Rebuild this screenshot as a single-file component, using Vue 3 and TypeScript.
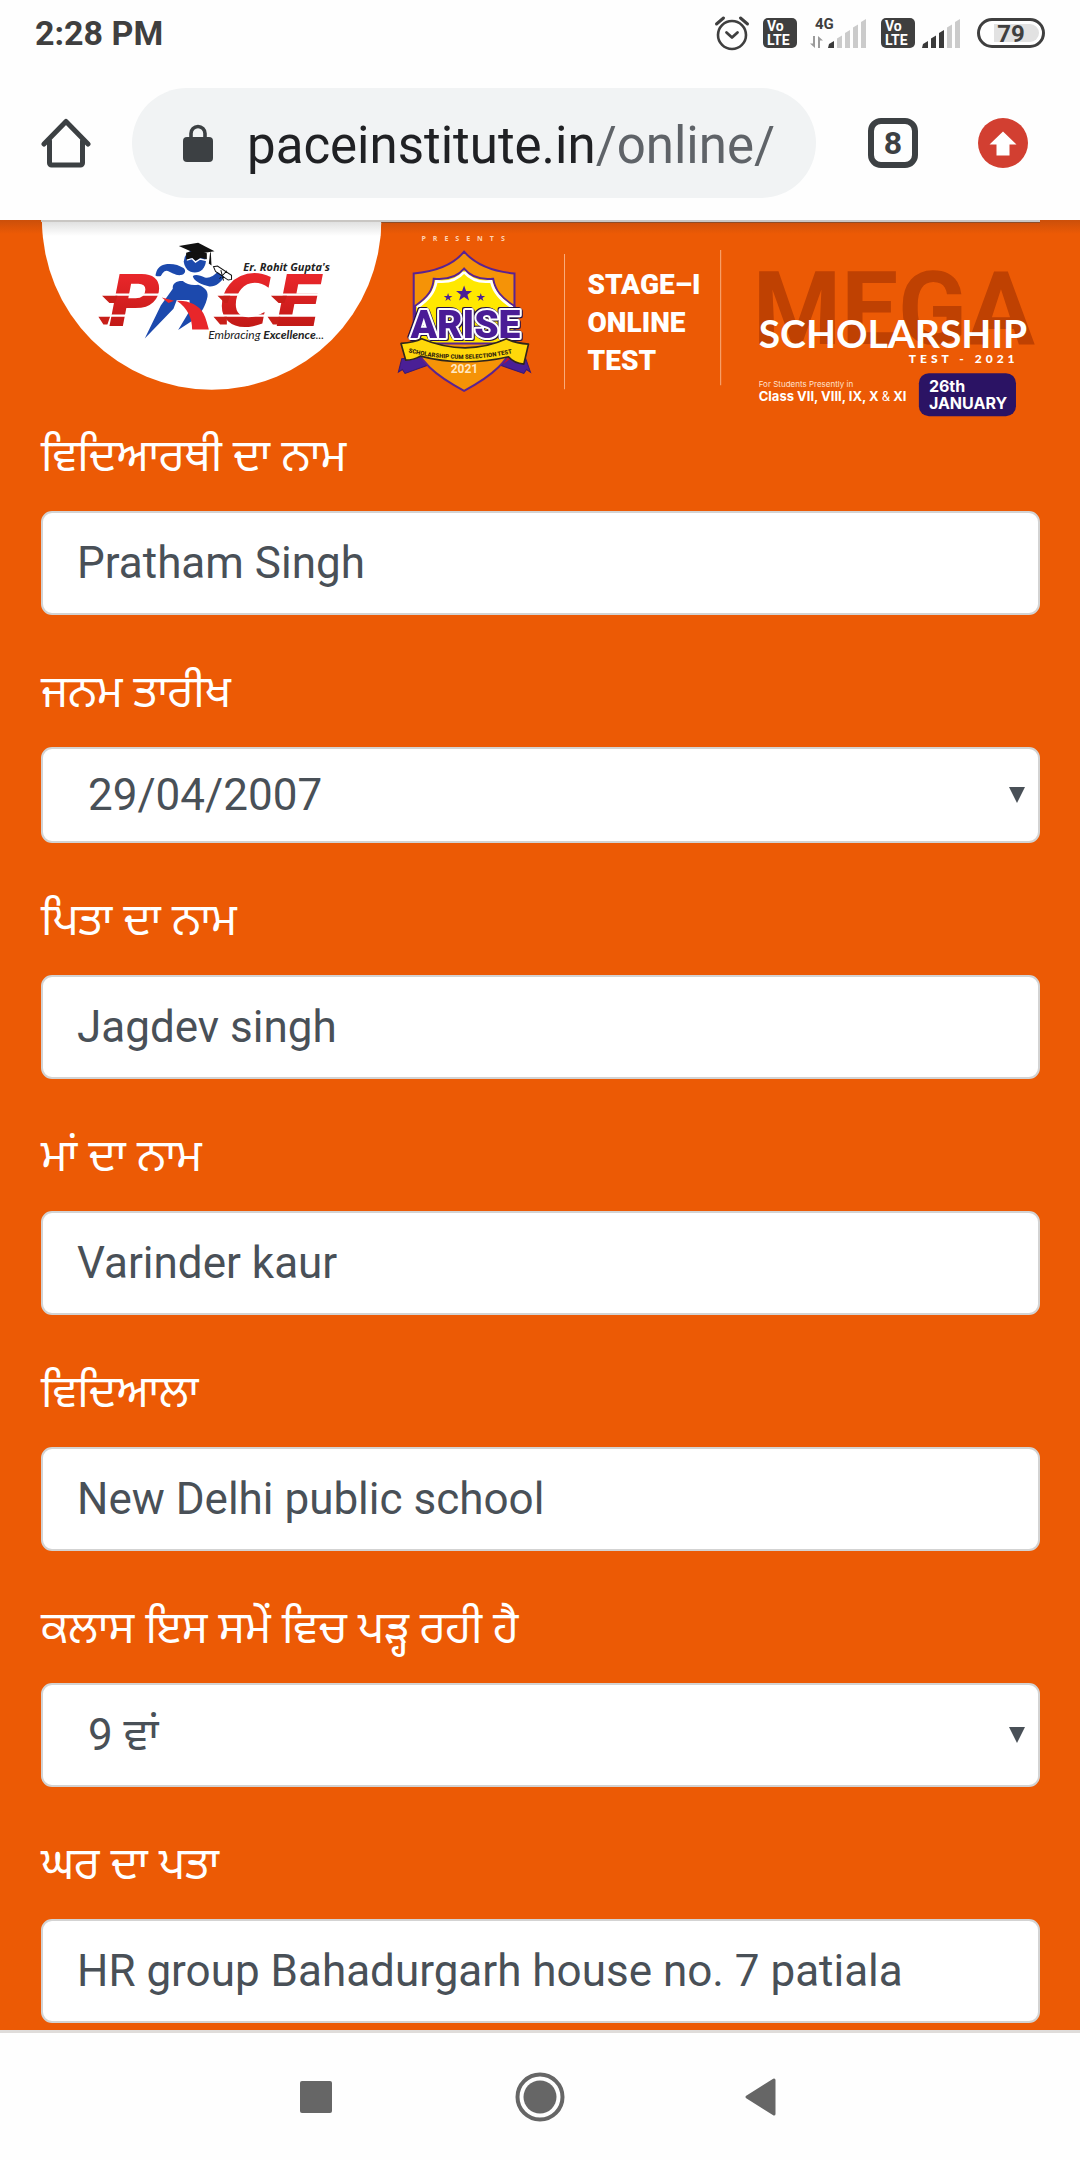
<script setup lang="ts">
import { reactive } from 'vue'

interface Field {
  id: string
  label: string
  kind: 'text' | 'date' | 'select'
}

const fields: Field[] = [
  { id: 'student', label: 'ਵਿਦਿਆਰਥੀ ਦਾ ਨਾਮ', kind: 'text' },
  { id: 'birth', label: 'ਜਨਮ ਤਾਰੀਖ', kind: 'date' },
  { id: 'father', label: 'ਪਿਤਾ ਦਾ ਨਾਮ', kind: 'text' },
  { id: 'mother', label: 'ਮਾਂ ਦਾ ਨਾਮ', kind: 'text' },
  { id: 'school', label: 'ਵਿਦਿਆਲਾ', kind: 'text' },
  { id: 'grade', label: 'ਕਲਾਸ ਇਸ ਸਮੇਂ ਵਿਚ ਪੜ੍ਹ ਰਹੀ ਹੈ', kind: 'select' },
  { id: 'address', label: 'ਘਰ ਦਾ ਪਤਾ', kind: 'text' },
]

const values = reactive<Record<string, string>>({
  student: 'Pratham Singh',
  birth: '29/04/2007',
  father: 'Jagdev singh',
  mother: 'Varinder kaur',
  school: 'New Delhi public school',
  grade: '9 ਵਾਂ',
  address: 'HR group Bahadurgarh house no. 7 patiala',
})

const signals = [
  { id: 'sim1', active: 1, data: true },
  { id: 'sim2', active: 3, data: false },
]
const bars = [0, 1, 2, 3, 4]
</script>

<template>
  <div class="screen">
    <header class="status">
      <span class="clock">2:28 PM</span>
      <div class="indicators">
        <svg class="alarm" viewBox="0 0 36 36" width="36" height="36" fill="none" stroke="#3f3f3f" stroke-linecap="round">
          <circle cx="18" cy="20" r="14" stroke-width="2.6" />
          <path d="M12.5 17.5 18 22.5 23.500 17.500" stroke-width="2.800" stroke-linejoin="round" />
          <path d="M2.500 9 9.500 3M33.500 9 26.500 3" stroke-width="3" />
        </svg>
        <template v-for="s in signals" :key="s.id">
          <svg class="volte" viewBox="0 0 34 30" width="34" height="30">
            <rect width="34" height="30" rx="5" fill="#3f3f3f" />
            <text x="4" y="13" font-size="14" fill="#fff">Vo</text>
            <text x="4" y="27" font-size="14" fill="#fff">LTE</text>
          </svg>
          <svg :class="{ plain: !s.data }" :viewBox="s.data ? '0 0 58 34' : '0 0 42 34'" :width="s.data ? 58 : 42" height="34">
            <g v-if="s.data">
              <text x="5" y="13" font-size="15" fill="#3f3f3f">4G</text>
              <path d="M5 20V32L0 27.500H3V20ZM8 32V20L13 24.500H10V32Z" fill="#9b9b9b" />
            </g>
            <g :transform="s.data ? 'translate(18 0)' : ''">
              <path
                v-for="b in bars"
                :key="b"
                :d="`M${b * 8 + 1} ${28 - b * 5.5}L${b * 8 + 6} ${25 - b * 5.5}V32H${b * 8 + (b ? 1 : 0)}Z`"
                :fill="b < s.active ? '#3a3a3a' : '#cbcbcb'"
              />
            </g>
          </svg>
        </template>
        <svg class="battery" viewBox="0 0 68 30" width="68" height="30">
          <rect x="1.500" y="1.500" width="65" height="27" rx="13.500" fill="#fff" stroke="#3f3f3f" stroke-width="3" />
          <path d="M17 6H53A9 9 0 0 1 53 24H17Z" fill="#e2e2e2" />
          <text x="34" y="24" font-size="24" text-anchor="middle" fill="#3f3f3f">79</text>
        </svg>
      </div>
    </header>

    <div class="toolbar">
      <button class="tool" type="button" aria-label="Home">
        <svg viewBox="0 0 50 50" width="50" height="50" fill="none" stroke="#3c4043" stroke-width="5" stroke-linejoin="round" stroke-linecap="round">
          <path d="M8.500 23V45a2 2 0 0 0 2 2H39.500a2 2 0 0 0 2-2V23" />
          <path d="M3 26 25 3.500 47 26" />
        </svg>
      </button>
      <button class="omnibox" type="button">
        <svg viewBox="0 0 30 38" width="30" height="38">
          <rect y="13" width="30" height="25" rx="4" fill="#3c4043" />
          <path d="M8 15V9.500a7 7 0 0 1 14 0V15" fill="none" stroke="#3c4043" stroke-width="3.600" />
        </svg>
        <span class="url"><span class="host">paceinstitute.in</span>/online/</span>
      </button>
      <button class="tool tabs" type="button" aria-label="Open tabs">8</button>
      <button class="tool" type="button" aria-label="Update available">
        <svg viewBox="0 0 50 50" width="50" height="50">
          <circle cx="25" cy="25" r="25" fill="#d23f31" />
          <path d="M25 13.500 38.500 26.500H31.500V37.500H18.500V26.500H11.500Z" fill="#fff" />
        </svg>
      </button>
    </div>

    <main class="page">
      <svg class="banner" viewBox="0 0 998 203">
        <defs>
          <linearGradient id="shade" x1="0" y1="0" x2="0" y2="1">
            <stop offset="0" stop-color="#dcdcdc" />
            <stop offset="1" stop-color="#fff" />
          </linearGradient>
          <linearGradient id="red" x1="0" y1="0" x2="0" y2="1">
            <stop offset="0.200" stop-color="#e8262a" />
            <stop offset="1" stop-color="#b5150f" />
          </linearGradient>
          <path id="ribbonLine" d="M367 132Q420 146 480 131" />
        </defs>

        <path d="M1 0H340A169.500 169.500 0 0 1 1 0Z" fill="#fff" />
        <path d="M1 0H340L339 16H2Z" fill="url(#shade)" />
        <rect x="340" y="2" width="658" height="1" fill="#8c4d28" />
        <rect width="998" height="2" fill="#c9c6c3" />

        <!-- PACE wordmark -->
        <g class="pace" fill="url(#red)">
          <text x="67" y="106">P</text>
          <text x="178" y="106">C</text>
          <text x="234" y="106">E</text>
        </g>
        <g transform="translate(-11 -10) scale(0.333333)">
          <g fill="#fff">
            <path d="M225 250H400V257H225ZM560 250H720V257H560ZM720 250H890V257H720Z" />
            <path d="M210 313H345V320H210ZM550 313H720V320H550ZM712 313H880V320H712Z" />
          </g>
          <g fill="#c81f19">
            <path d="M216 257H262L255 279H238ZM205 320H240L232 343H220ZM562 257H600L592 279H584ZM550 320H590L590 343H570ZM722 257H770L762 279H745ZM712 320H750L742 343H728Z" />
          </g>
          <!-- runner -->
          <g fill="#1c49ad">
            <path d="M376 196C380 176 388 166 404 163C424 159 446 164 460 174C470 182 464 194 452 195C436 197 424 186 410 182C400 182 396 192 392 198C386 199 380 199 376 196Z" />
            <path d="M488 198C496 192 510 196 524 202C538 206 552 196 562 186L582 200C572 218 556 230 538 229C518 226 490 214 488 198Z" />
            <path d="M428 236C426 220 440 212 458 213C470 224 486 226 504 224C526 232 538 246 530 268C522 296 508 316 490 330L444 360L480 300L478 270L440 270L430 296L344 385L392 286Z" />
            <circle cx="494" cy="154" r="33" />
          </g>
          <path d="M440 272C474 270 506 284 520 310C528 326 532 344 536 358H486C486 326 474 296 440 272Z" fill="#e8262a" />
          <path d="M395 262 432 272 415 279Z" fill="#e8262a" />
          <path d="M468 150V128L498 120 530 130V148L512 144 496 152 484 144Z" fill="#111" />
          <path d="M446 108 504 98 553 124 500 132Z" fill="#111" />
          <path d="M470 150 486 146 496 156 510 147 530 152" fill="none" stroke="#fff" stroke-width="4" />
          <path d="M540 126 536 160 544 166 542 128Z" fill="#111" />
          <path d="M556 184 550 170 562 168 604 196 604 208 594 210ZM572 180 580 212M590 182 568 206" fill="none" stroke="#111" stroke-width="3" />
        </g>
        <text x="202" y="51" class="author">Er. Rohit Gupta's</text>
        <text x="167" y="119" class="tagline">Embracing <tspan class="strong">Excellence</tspan>...</text>

        <!-- ARISE shield -->
        <text x="380" y="21" class="presents">PRESENTS</text>
        <g transform="translate(339 -10) scale(0.333333)">
          <path d="M64 446 54 486 66 478 74 490 140 466 120 440ZM436 446 450 486 438 478 430 490 362 466 382 440Z" fill="#4a1f96" stroke="#3a1870" stroke-width="3" />
          <path d="M118 440 140 466 130 446ZM382 440 368 462 392 444Z" fill="#c3122f" />
          <path d="M251 125C282 160 330 184 402 190V380C396 450 330 500 251 542C172 500 104 450 100 380V190C172 184 222 160 251 125Z" fill="#f59307" stroke="#5a2391" stroke-width="6" />
          <path d="M251 176C272 202 302 210 338 206C344 240 360 262 402 288V400H104V288C142 262 158 240 160 206C200 210 230 202 251 176Z" fill="#ffe800" stroke="#5a2391" stroke-width="6" />
          <path d="M251 186C272 210 302 218 332 214C340 246 358 268 396 292M110 292C146 268 162 246 168 214C200 218 230 210 251 186" fill="none" stroke="#fff" stroke-width="8" />
          <path d="M251 226 257 243 275 243 261 254 266 271 251 261 236 271 241 254 227 243 245 243ZM203 249 206 258 216 258 208 264 211 273 203 267 195 273 198 264 190 258 200 258ZM301 249 304 258 314 258 306 264 309 273 301 267 293 273 296 264 288 258 298 258Z" fill="#4a1f96" />
        </g>
        <text x="424" y="118" text-anchor="middle" class="arise">ARISE</text>
        <g transform="translate(339 -10) scale(0.333333)">
          <path d="M62 400C88 398 108 394 124 386C210 422 300 422 378 386C394 394 416 400 444 402L430 462C412 460 396 454 384 440C300 460 204 460 120 438C106 446 90 450 76 450Z" fill="#ffd80a" stroke="#30261c" stroke-width="5" stroke-linejoin="round" />
        </g>
        <text class="ribbon"><textPath href="#ribbonLine">SCHOLARSHIP CUM SELECTION TEST</textPath></text>
        <text x="423" y="153" text-anchor="middle" class="year">2021</text>

        <!-- stage title -->
        <path d="M523 34V169M679 30V165" stroke="#f9ad7d" stroke-width="1" />
        <g class="stage">
          <text x="546" y="74">STAGE–I</text>
          <text x="546" y="112">ONLINE</text>
          <text x="546" y="150">TEST</text>
        </g>

        <!-- scholarship title -->
        <text x="852" y="124" text-anchor="middle" class="mega">MEGA</text>
        <text x="717" y="128" class="scholar">SCHOLARSHIP</text>
        <text x="867" y="143" class="test">TEST - 2021</text>
        <text x="717" y="167" class="for">For Students Presently in</text>
        <text x="717" y="181" class="class">Class VII, VIII, IX, X <tspan class="amp">&amp;</tspan> XI</text>
        <rect x="877" y="153" width="97" height="43" rx="10" fill="#2b1364" />
        <text x="887" y="172" class="date">26th</text>
        <text x="887" y="189" class="date">JANUARY</text>
      </svg>

      <form class="form" @submit.prevent>
        <div v-for="f in fields" :key="f.id" class="group">
          <label :for="f.id">{{ f.label }}</label>
          <input v-if="f.kind === 'text'" :id="f.id" v-model="values[f.id]" class="control" type="text" />
          <div v-else class="picker">
            <select :id="f.id" v-model="values[f.id]" class="control" :class="{ short: f.kind === 'date' }">
              <option>{{ values[f.id] }}</option>
            </select>
            <svg class="caret" viewBox="0 0 16 16" width="16" height="16"><path d="M0 0H16L8 16Z" fill="#495057" /></svg>
          </div>
        </div>
      </form>
    </main>

    <nav class="keys">
      <button type="button" aria-label="Recent apps">
        <svg viewBox="0 0 50 50" width="50" height="50"><rect x="9" y="9" width="32" height="32" rx="2" fill="#666" /></svg>
      </button>
      <button type="button" aria-label="Home screen">
        <svg viewBox="0 0 50 50" width="50" height="50">
          <circle cx="25" cy="25" r="22.500" fill="none" stroke="#666" stroke-width="4" />
          <circle cx="25" cy="25" r="16.500" fill="#666" />
        </svg>
      </button>
      <button type="button" aria-label="Back">
        <svg viewBox="0 0 50 50" width="50" height="50">
          <path d="M8 25 35 8V42Z" fill="#666" stroke="#666" stroke-width="3" stroke-linejoin="round" />
        </svg>
      </button>
    </nav>
  </div>
</template>

<style>
body {
  margin: 0;
  background: #fff;
}
</style>

<style scoped>
.screen {
  display: flex;
  flex-direction: column;
  min-height: 100vh;
  font-family: Roboto, "Noto Sans", "Noto Sans Gurmukhi", sans-serif;
  background: #fefefe;
}
button {
  padding: 0;
  border: 0;
  background: none;
  font-family: inherit;
}
svg {
  display: block;
  flex: none;
}
.status {
  display: flex;
  align-items: center;
  justify-content: space-between;
  height: 66px;
  padding: 0 35px;
  color: #3f3f3f;
}
.clock {
  font-size: 34px;
  font-weight: 700;
}
.indicators {
  display: flex;
  align-items: center;
  gap: 13px;
  font-weight: 700;
}
.plain {
  margin-left: -6px;
}
.toolbar {
  display: flex;
  align-items: center;
  height: 154px;
  padding: 0 52px 0 41px;
}
.tool {
  width: 50px;
  height: 50px;
  flex: none;
}
.omnibox {
  display: flex;
  align-items: center;
  flex: 1;
  min-width: 0;
  height: 110px;
  margin: 0 52px 0 41px;
  padding: 0 42px 0 51px;
  gap: 34px;
  border-radius: 55px;
  background: #f1f3f4;
}
.url {
  padding-top: 6px;
  font-size: 51px;
  line-height: 60px;
  color: #5f6368;
  white-space: nowrap;
}
.host {
  color: #202124;
}
.tabs {
  box-sizing: border-box;
  margin-right: 60px;
  border: 6px solid #3c4043;
  border-radius: 13px;
  color: #3c4043;
  font-size: 32px;
  line-height: 38px;
  font-weight: 700;
}
.page {
  flex: 1;
  padding: 0 40px 0 41px;
  background: linear-gradient(#cb4f0a, #ec5a05 14px);
}
.banner {
  width: 100%;
  height: auto;
}
.pace {
  font: italic 700 71px "DejaVu Sans", sans-serif;
}
.author {
  font: italic 700 11px "Open Sans", sans-serif;
  fill: #222;
}
.tagline {
  font: italic 400 12px Lato, sans-serif;
  fill: #222;
}
.strong {
  font-weight: 700;
}
.presents {
  font: 700 7px "Open Sans", sans-serif;
  letter-spacing: 7px;
  fill: #ffd2b3;
}
.arise {
  font: 900 39px Roboto, sans-serif;
  fill: #4a1c96;
  stroke: #fff;
  stroke-width: 4px;
  stroke-linejoin: round;
  paint-order: stroke;
  filter: drop-shadow(1px 1px 0 #241044) drop-shadow(-1px -1px 0 #241044);
}
.ribbon {
  font: 900 6px Roboto, sans-serif;
  fill: #33240c;
}
.year {
  font: 700 12px Roboto, sans-serif;
  fill: #ffe9c4;
}
.stage {
  font: 900 28px Roboto, sans-serif;
  fill: #fff;
}
.mega {
  font: 700 101px Roboto, sans-serif;
  fill: #bf4102;
}
.scholar {
  font: 700 39px Lato, sans-serif;
  fill: #fff;
}
.test {
  font: 900 12px Lato, sans-serif;
  letter-spacing: 4px;
  fill: #fff;
}
.for {
  font: 400 8px Inter, sans-serif;
  fill: #ffe0cc;
}
.class {
  font: 700 13px Inter, sans-serif;
  fill: #fff;
}
.amp {
  font-weight: 400;
}
.date {
  font: 700 16px Inter, sans-serif;
  fill: #fff;
}
.form {
  color: #fff;
}
.group {
  display: flex;
  flex-direction: column;
  margin-bottom: 44px;
}
.group:last-child {
  margin-bottom: 6px;
}
label {
  height: 66px;
  margin-bottom: 22px;
  font-size: 44px;
  line-height: 66px;
}
.control {
  box-sizing: border-box;
  display: block;
  width: 100%;
  height: 104px;
  padding: 0 34px;
  border: 2px solid #d3d3d3;
  border-radius: 11px;
  background: #fff;
  color: #495057;
  font-family: inherit;
  font-size: 44px;
  appearance: none;
}
select.control {
  padding-left: 45px;
}
.control.short {
  height: 96px;
}
.picker {
  position: relative;
}
.caret {
  position: absolute;
  top: 50%;
  right: 15px;
  margin-top: -8px;
  pointer-events: none;
}
.keys {
  display: flex;
  justify-content: center;
  align-items: center;
  gap: 174px;
  height: 127px;
  border-top: 3px solid #dfdcda;
}
</style>
